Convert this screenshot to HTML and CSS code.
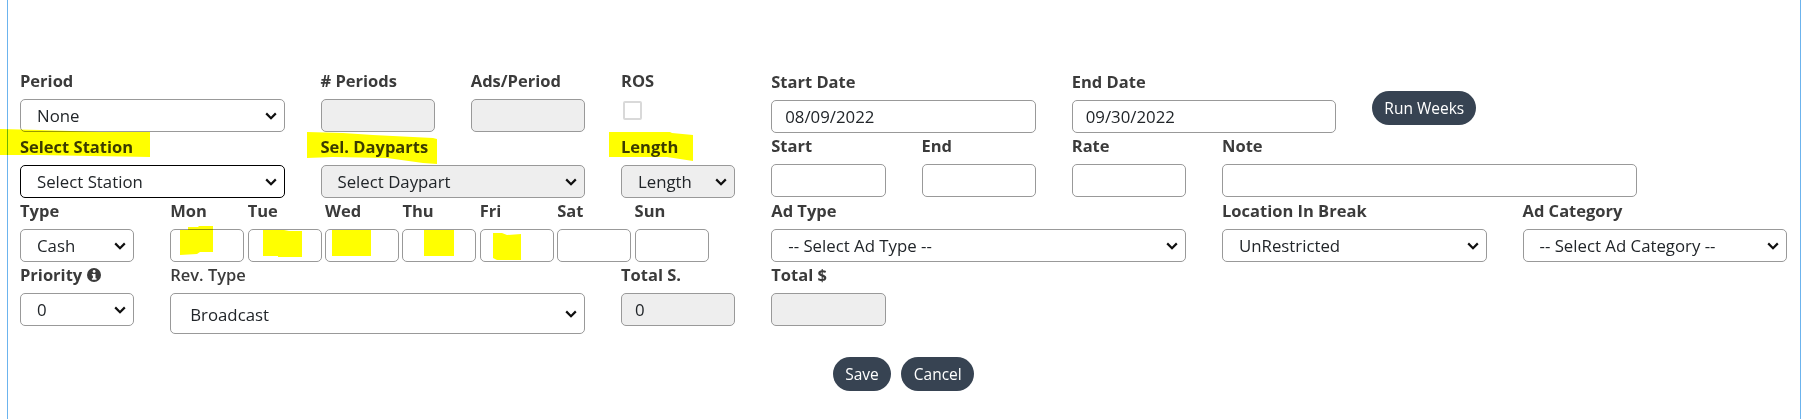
FILE: index.html
```html
<!DOCTYPE html>
<html lang="en">
<head>
<meta charset="utf-8">
<title>Schedule line</title>
<link rel="stylesheet" href="styles.css">
</head>
<body>
<main class="panel">
  <form class="form">
    <div class="row row-first">
      <div class="field span-2"><label class="label">Period</label><select class="control"><option>None</option></select></div>
      <div class="field"><label class="label"># Periods</label><input class="control is-off" type="text"></div>
      <div class="field"><label class="label">Ads/Period</label><input class="control is-off" type="text"></div>
      <div class="field"><label class="label">ROS</label><input class="check" type="checkbox" disabled></div>
      <div class="field span-2 nudge-down"><label class="label">Start Date</label><input class="control" type="text" value="08/09/2022"></div>
      <div class="field span-2 nudge-down"><label class="label">End Date</label><input class="control" type="text" value="09/30/2022"></div>
      <div class="field field-action"><button class="pill pill-run" type="button">Run Weeks</button></div>
    </div>
    <div class="row">
      <div class="field span-2"><label class="label">Select Station</label><select class="control is-focus"><option>Select Station</option></select></div>
      <div class="field span-2"><label class="label">Sel. Dayparts</label><select class="control is-off"><option>Select Daypart</option></select></div>
      <div class="field"><label class="label">Length</label><select class="control is-off"><option>Length</option></select></div>
      <div class="field nudge-up"><label class="label">Start</label><input class="control" type="text"></div>
      <div class="field nudge-up"><label class="label">End</label><input class="control" type="text"></div>
      <div class="field nudge-up"><label class="label">Rate</label><input class="control" type="text"></div>
      <div class="field span-3 nudge-up"><label class="label">Note</label><input class="control" type="text"></div>
    </div>
    <div class="row row-lower">
      <div class="field"><label class="label">Type</label><select class="control"><option>Cash</option></select></div>
      <div class="days span-4">
        <div class="field"><label class="label">Mon</label><input class="control" type="text"></div>
        <div class="field"><label class="label">Tue</label><input class="control" type="text"></div>
        <div class="field"><label class="label">Wed</label><input class="control" type="text"></div>
        <div class="field"><label class="label">Thu</label><input class="control" type="text"></div>
        <div class="field"><label class="label">Fri</label><input class="control" type="text"></div>
        <div class="field"><label class="label">Sat</label><input class="control" type="text"></div>
        <div class="field"><label class="label">Sun</label><input class="control" type="text"></div>
      </div>
      <div class="field span-3"><label class="label">Ad Type</label><select class="control"><option>-- Select Ad Type --</option></select></div>
      <div class="field span-2"><label class="label">Location In Break</label><select class="control"><option>UnRestricted</option></select></div>
      <div class="field span-2"><label class="label">Ad Category</label><select class="control"><option>-- Select Ad Category --</option></select></div>
    </div>
    <div class="row row-lower">
      <div class="field"><label class="label">Priority
        <svg class="info" viewBox="0 0 14 14" aria-hidden="true"><circle cx="7" cy="7" r="7"/><circle class="info-cut" cx="7.1" cy="3.4" r="1.4"/><path class="info-cut" d="M4.9 6h3.6v4.3h1v1.5H4.9v-1.5h1V7.5h-1z"/></svg>
      </label><select class="control"><option>0</option></select></div>
      <div class="field span-3"><label class="label label-plain">Rev. Type</label><select class="control control-tall"><option>Broadcast</option></select></div>
      <div class="field"><label class="label">Total S.</label><input class="control is-off" type="text" value="0"></div>
      <div class="field"><label class="label">Total $</label><input class="control is-off" type="text"></div>
    </div>
    <div class="actions">
      <button class="pill" type="button">Save</button>
      <button class="pill" type="button">Cancel</button>
    </div>
  </form>
</main>
<svg class="marker" viewBox="0 0 1802 419" aria-hidden="true">
  <polygon points="0,129 40,130 100,132 150,132 150,157 90,156 40,155 0,155"/>
  <polygon points="307,132 343,133 373,135 433,138 437,139 437,164 423,163 387,158 333,157 307,158"/>
  <polygon points="609,132 670,132 672,133 693,135 693,161 667,157 609,157"/>
  <polygon points="180,230 188,230 188,227 198,227 199,226 213,226 213,252 200,252 197,254 180,255"/>
  <polygon points="263,230 284,230 289,231 302,231 302,257 278,257 278,256 263,256"/>
  <polygon points="332,230 371,230 371,256 332,256"/>
  <polygon points="424,230 454,230 454,256 424,256"/>
  <polygon points="493,233 502,233 507,235 521,234 521,260 497,260 493,258"/>
</svg>
</body>
</html>
```

FILE: styles.css
```css
* { box-sizing: border-box; }

html, body {
  margin: 0;
  height: 419px;
  overflow: hidden;
  background: #fff;
}

body {
  font-family: "Open Sans", "Liberation Sans", sans-serif;
  font-size: 16.8px;
  color: #212529;
}

.panel {
  margin-left: 7px;
  width: 1794px;
  height: 419px;
  padding: 69px 13px 0 12px;
  border-left: 1px solid #6cb4ee;
  border-right: 1px solid #6cb4ee;
}

.row {
  display: grid;
  grid-template-columns: repeat(12, 1fr);
  column-gap: 36px;
}

.row-first { margin-bottom: 2px; }

.field {
  display: flex;
  flex-direction: column;
  align-items: stretch;
  min-width: 0;
}

.span-2 { grid-column: span 2; }
.span-3 { grid-column: span 3; }
.span-4 { grid-column: span 4; }

.nudge-down { padding-top: 1px; }
.nudge-up { margin-top: -1px; }

.label {
  display: flex;
  align-items: center;
  gap: 5px;
  height: 24px;
  margin-bottom: 6px;
  font-size: 16.5px;
  font-weight: 700;
  line-height: 24px;
  color: #3b3b3b;
  white-space: nowrap;
}

.row-lower .label {
  padding-top: 2px;
  margin-bottom: 7px;
}

.label-plain { font-weight: 600; }

.control {
  width: 100%;
  height: 33px;
  padding: 0 13px;
  border: 1px solid #999;
  border-radius: 5px;
  background-color: #fff;
  font: inherit;
  color: #212529;
}

select.control {
  appearance: none;
  padding-left: 16px;
  background-image: url("data:image/svg+xml,%3Csvg xmlns='http://www.w3.org/2000/svg' width='12' height='8' viewBox='0 0 12 8'%3E%3Cpath d='M1.2 1.4 6 6.2l4.8-4.8' fill='none' stroke='%23111' stroke-width='2.2'/%3E%3C/svg%3E");
  background-repeat: no-repeat;
  background-position: right 7px center;
}

select.control-tall {
  height: 41px;
  padding-left: 19px;
  padding-top: 2px;
}

.is-off { background-color: #eee; }
.is-focus { border-color: #000; }

.check {
  appearance: none;
  width: 19px;
  height: 19px;
  margin: 2px 0 0 2px;
  border: 2px solid #d9d9d9;
  border-radius: 2px;
  background: #fff;
}

.field-action { justify-content: flex-start; align-items: flex-start; padding-top: 22px; }

.days {
  display: grid;
  grid-template-columns: repeat(7, 74px);
  column-gap: 3.4px;
}

.info { width: 14px; height: 14px; fill: #3b3b3b; }
.info-cut { fill: #fff; }

.actions {
  display: flex;
  justify-content: center;
  gap: 10px;
  margin-top: 23px;
}

.pill {
  height: 34px;
  padding: 0 12.5px;
  border: 0;
  border-radius: 17px;
  background: #374352;
  color: #fff;
  font: inherit;
  font-size: 15.5px;
}

.pill-run { width: 104px; height: 34px; padding: 0; border-radius: 17px; }

.marker {
  position: absolute;
  left: 0;
  top: 0;
  width: 1802px;
  height: 419px;
  mix-blend-mode: multiply;
  pointer-events: none;
}

.marker polygon { fill: #ffff00; }
```
